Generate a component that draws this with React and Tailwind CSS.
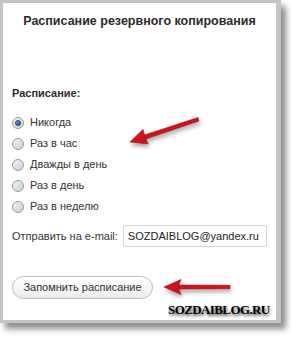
import React from "react";

const options = ["Никогда", "Раз в час", "Дважды в день", "Раз в день", "Раз в неделю"];

const Radio = ({ checked }) => (
    <span className="relative w-[12px] h-[12px] rounded-full border border-[#9a9a9a] bg-gradient-to-br from-[#f4f4f4] to-[#cfcfcf] flex items-center justify-center shrink-0">
        {checked && <span className="w-[6px] h-[6px] rounded-full bg-gradient-to-br from-[#6fb6f0] to-[#0b4f9a] border border-[#0b3f7a]" />}
    </span>
);

const App = () => {
    return (
        <div className="w-[292px] h-[339px] bg-white relative font-['Liberation_Sans',Arial,sans-serif] text-[#333]">
            {/* Frame */}
            <div className="w-[281px] h-[323px] border-[3px] border-r-[5px] border-[#c4c4c4] bg-white shadow-[5px_6px_6px_rgba(0,0,0,0.45)] flex flex-col px-[9px] pt-[10px] whitespace-nowrap">
                <h1 className="text-[12.5px] leading-[16px] font-bold text-center text-[#2b2b2b]">
                    Расписание резервного копирования
                </h1>

                <p className="mt-[57px] text-[11px] leading-[14px] font-bold text-[#2b2b2b]">Расписание:</p>

                <div className="mt-[12px] flex flex-col">
                    {options.map((o, i) => (
                        <label key={o} className="h-[21px] flex items-center gap-[6px] text-[11px]">
                            <Radio checked={i === 0} />
                            {o}
                        </label>
                    ))}
                </div>

                <div className="mt-[8px] flex items-center gap-[5px] text-[11px]">
                    <span>Отправить на e-mail:</span>
                    <div className="w-[144px] h-[22px] border border-[#d6d6d6] rounded-[2px] px-[4px] flex items-center text-[11px] text-[#222]">
                        SOZDAIBLOG@yandex.ru
                    </div>
                </div>

                <div className="mt-[27px]">
                    <button className="w-[141px] h-[23px] rounded-full border border-[#bdbdbd] bg-gradient-to-b from-[#ffffff] to-[#ececec] text-[11px] text-[#333]">
                        Запомнить расписание
                    </button>
                </div>
            </div>

            {/* Arrows */}
            <svg className="absolute inset-0 pointer-events-none" width="292" height="339" viewBox="0 0 292 339">
                <defs>
                    <filter id="sh" x="-20%" y="-50%" width="140%" height="200%">
                        <feDropShadow dx="1" dy="3" stdDeviation="2" floodColor="#000" floodOpacity="0.35" />
                    </filter>
                </defs>
                <g filter="url(#sh)" fill="#c8141c" stroke="#a50d14" strokeWidth="0.6">
                    <path d="M198 117.5 L199 121 L146 139 L144.5 135 Z" />
                    <path d="M130 142 L143 129.5 L145 136.5 L148 144 Z" />
                    <path d="M230 285.2 L230 288.8 L178 289 L178 285 Z" />
                    <path d="M164 287 L181 279.5 L178 287 L181 294.5 Z" />
                </g>
            </svg>

            {/* Watermark */}
            <div className="absolute left-[168px] top-[302px] font-['Liberation_Serif',serif] font-bold text-[13px] leading-[15px] tracking-[-0.6px] text-black [text-shadow:1px_2px_3px_rgba(0,0,0,0.75)]">
                SOZDAIBLOG.RU
            </div>
        </div>
    );
};

export default App;
